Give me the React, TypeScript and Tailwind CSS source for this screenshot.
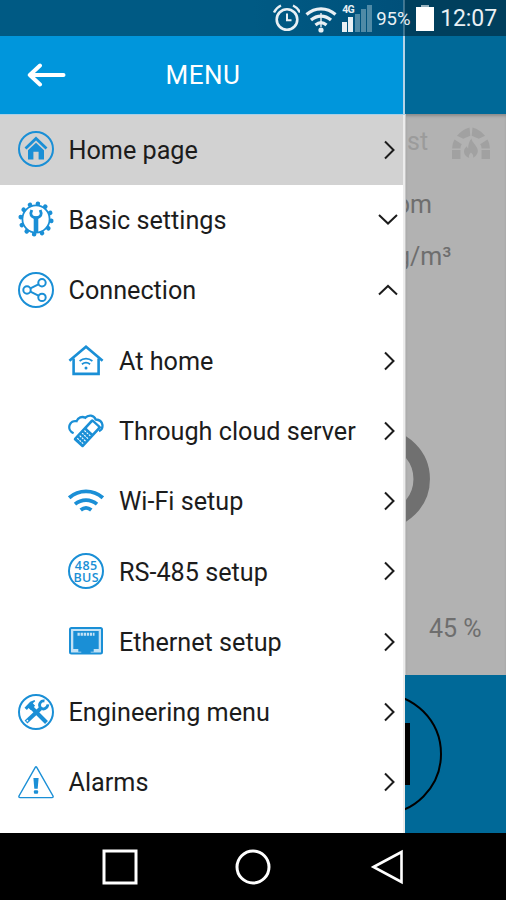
import type { ReactNode } from "react";

type Arrow = "right" | "down" | "up";

interface MenuItem {
  label: string;
  icon: ReactNode;
  arrow: Arrow;
  sub?: boolean;
  active?: boolean;
}

const BLUE = "#1a8fd6";

function Icon({ children }: { children: ReactNode }) {
  return (
    <svg className="w-9 h-9 mb-[2px] shrink-0" viewBox="0 0 36 36" fill="none" stroke={BLUE} strokeWidth={2}>
      {children}
    </svg>
  );
}

function HomeIcon() {
  return (
    <Icon>
      <circle cx="18" cy="18" r="17" />
      <path d="M7.5 17.5L18 7.5l10.5 10" strokeWidth={2.8} />
      <path d="M10 19.3l8-7.6 8 7.6v9.2h-5.4v-7.8h-5.2v7.8H10z" fill={BLUE} stroke="none" />
    </Icon>
  );
}

function GearIcon() {
  const teeth = Array.from({ length: 12 }, (_, i) => i * 30 + 7);
  return (
    <Icon>
      <circle cx="18" cy="18" r="13.6" strokeWidth={1.8} />
      {teeth.map((deg) => (
        <circle key={deg} cx="18" cy="2.6" r="2.3" fill={BLUE} stroke="none" transform={`rotate(${deg} 18 18)`} />
      ))}
      <path d="M13.8 9l-1 3.2c0 2.6 2.2 4.4 5.2 4.4s5.2-1.8 5.2-4.4l-1-3.2" strokeWidth={2.8} />
      <path d="M18 15.5V31" strokeWidth={4.6} />
    </Icon>
  );
}

function ShareIcon() {
  return (
    <Icon>
      <circle cx="18" cy="18" r="17" />
      <circle cx="9" cy="18" r="3.7" />
      <circle cx="24" cy="10.8" r="3.7" />
      <circle cx="24" cy="25.4" r="3.7" />
      <path d="M12.4 16.4l8-4M12.4 19.6l8 4" />
    </Icon>
  );
}

function HouseWifiIcon() {
  return (
    <Icon>
      <path d="M1.4 18.8L18 4.8l16.6 14" strokeWidth={2.6} />
      <path d="M5.6 16.5v15.4h25V16.5" strokeWidth={2.6} />
      <path d="M11.6 19c3.8-3.1 9-3.1 12.8 0M13.9 22.2c2.5-1.9 5.7-1.9 8.2 0" strokeWidth={1.7} />
      <circle cx="18" cy="26" r="1.5" fill={BLUE} stroke="none" />
    </Icon>
  );
}

function CloudPhoneIcon() {
  return (
    <Icon>
      <path
        d="M5.6 21.2C2 19.6.6 16.2 1.6 13.2c1-3 4-4.7 7-4C10 5.6 14 3.9 17.3 5.8c3-3.4 8.6-3 10.4 1.7 3.3.2 6.2 2.2 6.7 5.3.4 2.8-.7 5.2-3.4 6.4"
        strokeWidth={2.3}
      />
      <g transform="rotate(43 18 22)">
        <rect x="12" y="6.5" width="13" height="28" rx="1.6" fill={BLUE} stroke="none" />
        <rect x="14.7" y="8.8" width="7.6" height="8.4" rx=".6" fill="#fff" stroke="none" />
        <path d="M14.5 20.5h8M14.5 24h8M14.5 27.5h8M14.5 31h8" stroke="#fff" strokeWidth={1.1} strokeDasharray="2 1" />
      </g>
    </Icon>
  );
}

function WifiIcon() {
  return (
    <Icon>
      <path d="M1.2 14.8c9.8-8.5 23.8-8.5 33.6 0" strokeWidth={3.8} />
      <path d="M7 21.2c6.4-5.5 15.6-5.5 22 0" strokeWidth={3.6} />
      <path d="M12.7 27c3.3-2.6 7.3-2.6 10.6 0" strokeWidth={3.8} />
    </Icon>
  );
}

function BusIcon() {
  return (
    <Icon>
      <circle cx="18" cy="18" r="17" />
      <g
        fill={BLUE}
        stroke="none"
        textAnchor="middle"
        className="font-['Open_Sans',sans-serif] text-[12.5px] font-semibold tracking-[0.4px]"
      >
        <text x="18.2" y="16.6">485</text>
        <text x="18.2" y="28.8">BUS</text>
      </g>
    </Icon>
  );
}

function EthernetIcon() {
  return (
    <Icon>
      <rect x="2" y="5" width="32" height="25.5" rx="1.5" fill="#c4e2f5" />
      <path d="M5.3 8h25.4v18h-5v2.8h-3V31h-9.4v-2.2h-3V26h-5z" fill={BLUE} stroke="none" />
      <path d="M9.5 11.2h17" stroke="#c4e2f5" strokeWidth={3} strokeDasharray="2.3 .8" />
    </Icon>
  );
}

function ToolsIcon() {
  return (
    <Icon>
      <circle cx="18" cy="18" r="17" />
      <path d="M13.5 13.5L28.5 28.5" strokeWidth={4} />
      <path d="M6.5 13.8l5.7-6 4.3-1.9.7 1.3-2.4 2 2.3 2.5-4.3 4.3-2.3-2-1.6 2z" fill={BLUE} stroke="none" />
      <path d="M22.5 14.5L8 28" strokeWidth={4} />
      <path d="M26.5 7c-3.6-.6-6.3 3-4.2 6.4 2.5 3 7 1.4 7.7-3" strokeWidth={2.8} />
      <circle cx="9.4" cy="26.7" r=".9" fill="#fff" stroke="none" />
    </Icon>
  );
}

function AlarmIcon() {
  return (
    <Icon>
      <path d="M18.6 3.2L35 32q.5 1.6-1 1.6H2q-1.5 0-1-1.6L17.4 3.2q.6-.8 1.2 0z" strokeWidth={1.4} />
      <path d="M15.4 14h5.2l-.9 10.7h-3.4z" fill={BLUE} stroke="none" />
      <rect x="15.9" y="26.2" width="4.2" height="3.5" rx="1" fill={BLUE} stroke="none" />
    </Icon>
  );
}

const items: MenuItem[] = [
  { label: "Home page", icon: <HomeIcon />, arrow: "right", active: true },
  { label: "Basic settings", icon: <GearIcon />, arrow: "down" },
  { label: "Connection", icon: <ShareIcon />, arrow: "up" },
  { label: "At home", icon: <HouseWifiIcon />, arrow: "right", sub: true },
  { label: "Through cloud server", icon: <CloudPhoneIcon />, arrow: "right", sub: true },
  { label: "Wi-Fi setup", icon: <WifiIcon />, arrow: "right", sub: true },
  { label: "RS-485 setup", icon: <BusIcon />, arrow: "right", sub: true },
  { label: "Ethernet setup", icon: <EthernetIcon />, arrow: "right", sub: true },
  { label: "Engineering menu", icon: <ToolsIcon />, arrow: "right" },
  { label: "Alarms", icon: <AlarmIcon />, arrow: "right" },
];

const arrowPaths: Record<Arrow, string> = {
  right: "M7 1.5l8.5 8.5L7 18.5",
  down: "M1 5l9 8.5L19 5",
  up: "M1 14.5L10 6l9 8.5",
};

function MenuRow({ item }: { item: MenuItem }) {
  return (
    <div
      className={`flex items-center h-[70.3px] pr-[5px] ${item.sub ? "pl-[68px]" : "pl-[17.5px]"} ${
        item.active ? "bg-[#d2d2d2]" : "bg-white"
      }`}
    >
      {item.icon}
      <span className="ml-[15px] mt-[1px] flex-1 text-[25.2px] text-[#1c1c1c] whitespace-nowrap">{item.label}</span>
      <svg className="w-5 h-5 mb-[1px] shrink-0" viewBox="0 0 20 20" fill="none" stroke="#1c1c1c" strokeWidth={2}>
        <path d={arrowPaths[item.arrow]} />
      </svg>
    </div>
  );
}

function StatusBar() {
  return (
    <div className="relative h-9 shrink-0 flex items-center justify-end pr-[9px] bg-linear-to-r from-[#005a84] from-50% via-[#00507a] via-[79.7%] to-[#003f5d] to-80% text-[#e9f0f4]">
      <svg className="w-7 h-7" viewBox="0 0 28 28" fill="none" stroke="currentColor" strokeWidth={2.6}>
        <circle cx="15" cy="15.5" r="10.3" />
        <path d="M15 9.5v6.8h4.5" strokeWidth={2} />
        <path d="M2 8.5Q4.5 3.5 9 1.5M28 8.5Q25.5 3.5 21 1.5" strokeWidth={2.4} />
      </svg>
      <svg className="w-8 h-7 ml-[5px] mt-[2px]" viewBox="0 0 32 28" fill="none" stroke="currentColor" strokeWidth={3.2}>
        <path d="M1.5 9.5c8.5-7.5 20.5-7.5 29 0" />
        <path d="M6 15c6-5.3 14-5.3 20 0" />
        <path d="M10.5 20c3.5-3 7.5-3 11 0" />
        <circle cx="16" cy="25" r="2.6" fill="currentColor" stroke="none" />
        <path d="M16 8v14" strokeWidth={1.4} />
      </svg>
      <div className="relative ml-[5px] mr-[4px] w-[30px] h-[27px] flex items-end justify-between">
        <span className="w-[5px] h-2.5 bg-[#e9f0f4]" />
        <span className="w-[5px] h-[15px] bg-[#e9f0f4]" />
        <span className="w-[5px] h-[18px] bg-[#4f8aa6]" />
        <span className="w-[5px] h-[23px] bg-[#4f8aa6]" />
        <span className="w-[5px] h-[27px] bg-[#4f8aa6]" />
        <span className="absolute left-0 top-0 text-[10.5px] leading-[10px] font-bold tracking-[-0.8px]">4G</span>
      </div>
      <span className="w-[35px] mt-[3px] text-[18.5px] whitespace-nowrap">95%</span>
      <div className="ml-[5px] flex flex-col items-center">
        <span className="w-2 h-[2px] bg-white/60" />
        <span className="w-[18px] h-6 bg-white" />
      </div>
      <span className="ml-[6px] mt-[3px] text-[23px] tracking-[-0.1px]">12:07</span>
      <span className="absolute left-[403px] top-0 w-[2px] h-9 bg-white/25" />
    </div>
  );
}

function Drawer() {
  return (
    <aside className="w-[405px] shrink-0 flex flex-col bg-white">
      <header className="flex items-center h-[79px] pl-[27px] bg-[#0096dc] border-b border-[#a9cfe6] border-r-2 border-r-[#b5d3e6]">
        <svg className="w-[39px] h-6" viewBox="0 0 39 24" fill="none" stroke="#fff" strokeWidth={4}>
          <path d="M2.8 12H36.5M13 2.5L2.8 12 13 21.5" strokeLinecap="round" strokeLinejoin="round" />
        </svg>
        <h1 className="ml-[99.5px] text-[26px] tracking-[0.5px] text-white">MENU</h1>
      </header>
      <nav className="flex-1 border-r-2 border-[#ececec]">
        {items.map((item) => (
          <MenuRow key={item.label} item={item} />
        ))}
      </nav>
    </aside>
  );
}

function FireplaceIcon() {
  return (
    <svg className="w-[38px] h-8" viewBox="0 0 38 32" fill="#a1a1a1">
      <path d="M0 23h8.5v9H0zM29.5 23H38v9h-8.5z" />
      <path d="M.2 21.5C.3 18 1 15.2 2.6 12.6l7.2 4.6c-.9 1.4-1.3 2.6-1.3 4.3zM37.8 21.5c-.1-3.5-.8-6.3-2.4-8.9l-7.2 4.6c.9 1.4 1.3 2.6 1.3 4.3z" />
      <path d="M5 8.8C8 5 11.5 2.3 17.500.5l.8 8.200-7.100 3.100zM33 8.800C30 5 26.500 2.300 20.500.5l-.8 8.200 7.100 3.100z" />
      <path d="M19.5 11.5c.3 4 6 7.2 6.3 12 .2 3.5-2.4 6.2-4.8 7.3.8-2.2-.2-3.8-2-5.3-1.6 1.5-2.7 3.2-1.8 5.3-3-.8-5.4-3.5-5.200-6.800.2-2.200 1.600-3.700 2.900-4.800.1 1 .5 1.800 1.200 2.300.2-3.500.8-7.200 3.400-10z" />
    </svg>
  );
}

// part of the unit screen that stays visible behind the drawer
function UnitScreen() {
  return (
    <main className="flex-1 min-w-0 flex flex-col overflow-hidden">
      <div className="h-[78px] shrink-0 bg-[#006998]" />
      <div className="h-[561px] shrink-0 flex flex-col items-start overflow-hidden bg-[#b2b2b2] border-l border-[#c6c6c6] text-[25px] leading-[30px] text-[#6e6e6e] shadow-[inset_0_3px_3px_-1px_#8a8a8a]">
        <div className="flex items-center mt-[12px] h-[34px]">
          <span className="text-[#9b9b9b] -mt-[3px] ml-[1px] w-[45px]">st</span>
          <FireplaceIcon />
        </div>
        <span className="mt-[30px] -ml-[10px]">pm</span>
        <span className="mt-[22px] -ml-[10px]">g/m³</span>
        <svg className="w-[25px] h-[102px] mt-[156px]" viewBox="0 0 25 102" fill="none" stroke="#707070">
          <circle cx="-26" cy="51" r="41.7" strokeWidth={16.5} />
        </svg>
        <span className="mt-[84px] ml-[23px]">45 %</span>
      </div>
      <div className="flex-1 flex items-center bg-[#006998]">
        <svg className="w-[38px] h-[124px]" viewBox="0 0 38 124" fill="none" stroke="#000">
          <circle cx="-24" cy="62" r="60" strokeWidth={2} />
          <path d="M2.5 31v62" strokeWidth={5} />
        </svg>
      </div>
    </main>
  );
}

function NavBar() {
  return (
    <div className="h-[67px] shrink-0 flex items-center justify-center gap-[97px] pr-[1px] bg-black text-white">
      <svg className="w-9 h-9" viewBox="0 0 36 36" fill="none" stroke="currentColor" strokeWidth={3}>
        <rect x="2" y="2" width="32" height="32" />
      </svg>
      <svg className="w-9 h-9" viewBox="0 0 36 36" fill="none" stroke="currentColor" strokeWidth={3}>
        <circle cx="18" cy="18" r="16" />
      </svg>
      <svg className="w-9 h-9" viewBox="0 0 36 36" fill="none" stroke="currentColor" strokeWidth={2.6}>
        <path d="M5.5 18L33.5 3v30z" />
      </svg>
    </div>
  );
}

export default function App() {
  return (
    <div className="w-[506px] h-[900px] flex flex-col overflow-hidden bg-black font-[Roboto,sans-serif]">
      <StatusBar />
      <div className="h-[797px] shrink-0 flex overflow-hidden">
        <Drawer />
        <UnitScreen />
      </div>
      <NavBar />
    </div>
  );
}
